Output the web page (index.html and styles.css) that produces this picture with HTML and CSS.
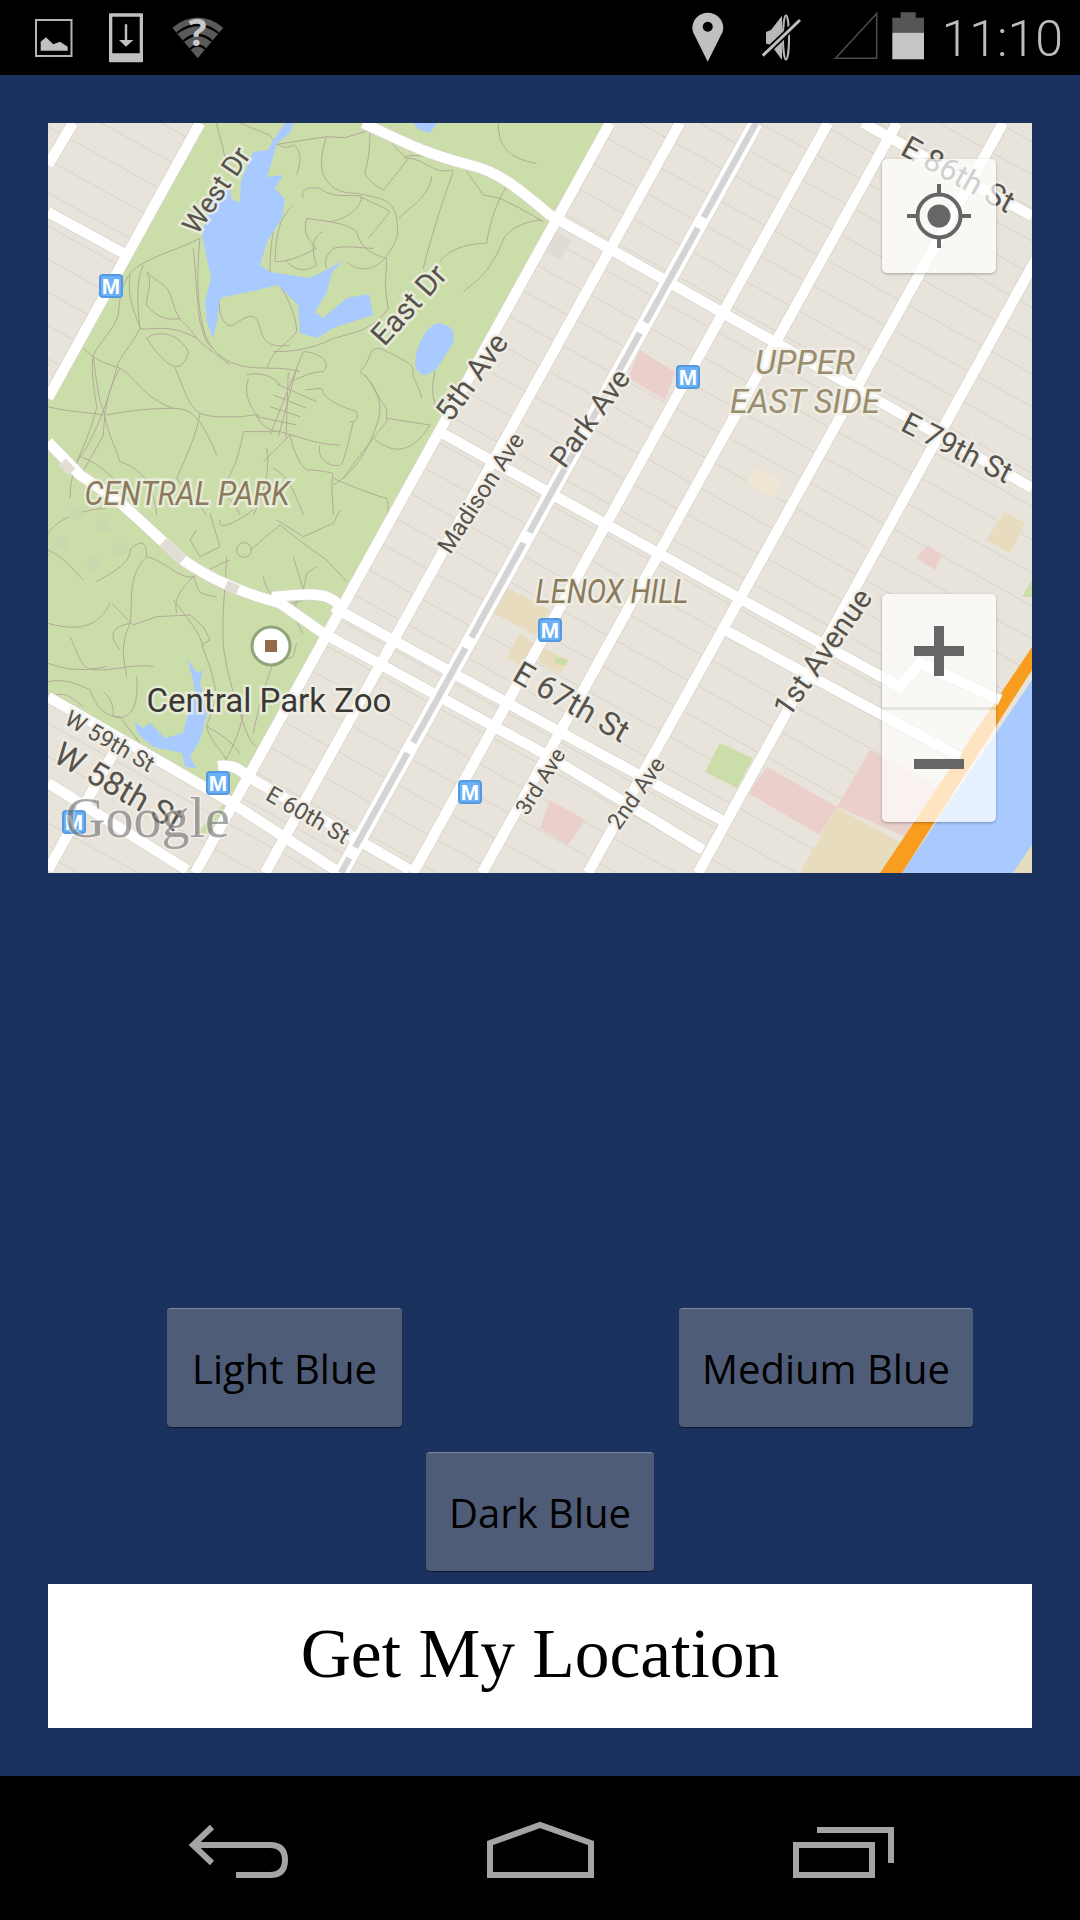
FILE: index.html
```html
<!DOCTYPE html>
<html lang="en">
<head>
  <meta charset="UTF-8">
  <meta name="viewport" content="width=device-width, initial-scale=1.0">
  <link rel="stylesheet" href="styles.css">
  <title>Get My Location</title>
</head>
<body>
  <div class="status-bar">
    <div class="status-group">
      <svg class="icon-photo" viewBox="35 0 38 75">
        <rect x="36" y="20" width="35.5" height="36" fill="none" stroke="#b4b4b4" stroke-width="2"/>
        <path d="M40.7 50.7V41.700L46 37.300 53.300 44.300 60 41.700 67.700 46.700V50.700Z" fill="#c0c0c0"/>
      </svg>
      <svg class="icon-download" viewBox="109 0 34 75">
        <path d="M110 13.300H142Q143 13.300 143 14.300V61.300Q143 62.300 142 62.300H110Q109 62.300 109 61.300V14.300Q109 13.300 110 13.300ZM112.300 16.700V53.300H139.700V16.700Z" fill="#c0c0c0" fill-rule="evenodd"/>
        <path d="M124.800 24.300H127.200V40H133.300L126 46.700 119 40H124.800Z" fill="#c0c0c0"/>
      </svg>
      <svg class="icon-wifi" viewBox="172 0 52 75">
        <path d="M172.300 27.700Q197.700 7.500 223.300 27.700L197.700 58.300Z" fill="#5a5a5a"/>
        <path d="M177 33Q197.700 17 218.500 33M183.500 41Q197.700 29 212 41M190 49Q197.700 42 205.500 49" fill="none" stroke="#000" stroke-width="2.200"/>
        <text class="wifi-mark" x="197.500" y="46">?</text>
      </svg>
    </div>
    <div class="status-group status-right">
      <svg class="icon-pin" viewBox="692 0 32 75">
        <path d="M707.700 61.700L695 36Q692.300 32 692.300 28.200A15.500 15.500 0 0 1 723.300 28.200Q723.300 32 720.500 36ZM707.700 21.700A5 5 0 1 0 707.800 21.700Z" fill="#c0c0c0" fill-rule="evenodd"/>
      </svg>
      <svg class="icon-mute" viewBox="761 0 40 75">
        <ellipse cx="786" cy="37.500" rx="3" ry="22" fill="none" stroke="#b8b8b8" stroke-width="2"/>
        <path d="M766 32L771 30 782 15.700V60L771 45 766 43.500Z" fill="#b8b8b8"/>
        <path d="M762.700 55.700L800 20" stroke="#000" stroke-width="6.500"/>
        <path d="M762.700 55.700L800 20" stroke="#c0c0c0" stroke-width="3"/>
      </svg>
      <svg class="icon-signal" viewBox="833 0 45 75">
        <path d="M835.500 58.300L876.700 13.500V58.300Z" fill="none" stroke="#4a4a4a" stroke-width="1.600"/>
      </svg>
      <svg class="icon-battery" viewBox="892 0 32 75">
        <path d="M900.700 12.300H915.700V17.700H924V32.700H892.300V17.700H900.700Z" fill="#565656"/>
        <rect x="892.300" y="32.700" width="31.700" height="26.600" fill="#c6c6c6"/>
      </svg>
      <span class="clock">11:10</span>
    </div>
  </div>

  <div class="main">
    <div class="map">
      <svg class="map-art" viewBox="48 123 984 750">
        <defs>
          <pattern id="alleys" width="100" height="29" patternUnits="userSpaceOnUse" patternTransform="rotate(29)">
            <path d="M0 .5H100" stroke="#d9d5ca" stroke-width="1"/>
          </pattern>
          <g id="roads" fill="none">
            <path d="M200 123L48 398M73 123L48 165M610 123L195 873M680 123L265 873M828 123L413 873M897 123L482 873M1003 123L588 873M1111 123L698 873M118 745L48 870"/>
            <path d="M363 123C400 140 420 152 470 165 500 172 520 190 550 215L1032 488M863 123L1032 216M48 212L123 253"/>
            <path d="M440 432L737 597 900 687 920 663 1000 700M333 607L540 721 725 822M280 603L323 633 550 757 703 850M725 630L960 757"/>
            <path d="M48 697L227 800 340 873M48 783L187 870M218 766C235 764 240 770 250 778L410 870"/>
            <path d="M48 442L80 475 117 500C135 515 150 530 183 560 200 572 230 590 280 603M272 597C300 594 310 594 325 596 335 600 340 605 342 610"/>
          </g>
        </defs>

        <rect x="48" y="123" width="984" height="750" fill="#e8e4dc"/>
        <rect x="48" y="123" width="984" height="750" fill="url(#alleys)"/>

        <!-- land use blocks -->
        <path class="block-pink" d="M640 350L675 372 665 400 628 378ZM767 767L837 807 820 835 748 793ZM870 750L960 800 913 840 837 807ZM928 545L942 555 935 570 916 558ZM550 800L585 820 568 845 540 828Z"/>
        <path class="block-sand" d="M507 588L550 610 535 635 493 613ZM520 633L537 647 523 667 507 657ZM540 647L570 660 560 673 540 663ZM1005 512L1025 523 1010 553 986 540ZM837 808L902 843 880 873H800Z"/>
        <path class="block-pale" d="M755 468L782 483 773 498 747 482Z"/>
        <path class="block-grey" d="M553 230L572 240 560 260 543 250Z"/>
        <path class="park" d="M720 743L753 758 737 788 705 772ZM1032 580V597L1022 597ZM557 657L568 660 565 666 554 663Z"/>

        <!-- central park -->
        <path class="park" d="M197 123L48 390V695L230 800 250 770 605 123ZM197 833L227 800 228 815 212 833Z"/>
        <g class="trails" transform="translate(40 115) scale(.3333)">
          <path d="M530 24C535 60 550 90 555 130M700 90L860 65 915 68 990 45"/>
          <path d="M860 65C845 110 840 140 850 180 870 220 900 235 950 235 1020 250 1060 250 1070 310 1075 360 1080 365 1035 430 1000 470 950 470 920 440"/>
          <path d="M990 50C990 100 985 140 975 170 975 190 1010 215 1030 225 1060 190 1090 150 1105 130 1150 130 1180 180 1240 165"/>
          <path d="M1175 185C1170 240 1120 270 1075 310M1240 170C1200 280 1170 380 1150 460M1375 24C1375 90 1400 130 1490 145"/>
          <path d="M1280 170L1330 240 1380 250 1440 280 1510 320M1400 215C1370 260 1350 320 1340 385 1270 385 1220 410 1200 440"/>
          <path d="M1505 315C1440 320 1400 350 1390 375 1350 470 1320 490 1270 530 1240 600M1270 540C1300 540 1320 560 1325 590 1310 620 1250 620 1190 620"/>
          <path d="M700 350C690 400 690 450 690 480 720 500 770 590 770 650 740 690 700 700 680 760"/>
          <path d="M760 270C720 310 710 340 705 440 750 440 790 420 830 400 800 370 790 350 800 310 860 320 910 320 950 350 960 400 1000 420 1040 430"/>
          <path d="M790 250C780 220 810 215 840 220 880 255 945 235 965 245 960 290 900 320 860 320M850 350C820 360 810 400 830 450 800 470 770 470 740 440"/>
          <path d="M880 400C860 420 850 440 860 460M880 400C920 390 960 400 1000 400"/>
          <path d="M1040 430C1040 480 1030 510 1045 580 1000 640 960 650 880 670 840 690 790 710 700 710 650 780 630 800M960 640V800"/>
          <path d="M540 550C530 620 570 640 580 630 610 610 650 580 660 640 670 680 690 700 750 690"/>
          <path d="M480 370C470 470 470 560 490 640 500 690 540 730 580 745 640 770 720 750 780 770"/>
          <path d="M310 450C290 490 290 560 300 640 330 650 380 620 470 670 500 700 520 710 570 750"/>
          <path d="M320 470C340 500 320 530 320 570 340 600 380 620 420 610 395 580 400 530 370 510 340 490 330 480 320 470"/>
          <path d="M300 640C270 700 240 720 230 760 210 840 160 980 120 1025"/>
          <path d="M130 700C160 730 180 740 240 760 280 780 310 850 400 880 450 880 480 900 530 1020M160 730C170 800 180 880 190 880M200 900C280 885 340 880 400 880"/>
          <path d="M320 670C360 640 420 660 445 710 440 740 420 760 400 755 360 730 340 700 320 670"/>
          <path d="M405 760C430 810 440 870 480 895 520 910 560 905 610 905 630 900 650 900 660 900"/>
          <path d="M625 790C610 840 630 870 650 900 660 930 690 950 720 950 790 970 840 990 900 990 920 1000"/>
          <path d="M940 920C930 960 920 1010 905 1050M840 990C830 1020 860 1060 900 1050M610 950C600 1000 590 1060 540 1130M610 950L720 950M670 1040L750 960"/>
          <path d="M750 960C760 1010 780 1050 800 1065 830 1065 860 1070 880 1075M880 1075C870 1110 880 1160 880 1200M880 1090C950 1120 1000 1140 1040 1150"/>
          <path d="M845 820C850 840 860 860 950 890 955 910 950 920 930 920M845 820L795 825"/>
          <path d="M1040 880C1000 830 1010 810 960 770 1000 730 980 700 1020 700 1060 720 1110 740 1120 760 1110 790 1140 810 1145 850 1140 890 1040 880"/>
          <path d="M1040 880L1040 920 1000 970M1040 910L1170 930M1190 880C1170 830 1180 800 1185 770"/>
          <path d="M975 780C1020 840 1030 880 1010 930 990 990 950 1070 880 1110M790 710C830 710 880 740 850 770 810 770 780 790 750 800M720 810C700 780 650 770 620 780"/>
          <path d="M790 710L690 960M770 760L715 965M745 770L738 970M712 808L830 860M700 840L800 880M690 875L780 905M650 905L770 930"/>
          <path d="M480 370C420 400 350 420 300 450 270 470 240 500 235 600 225 640 180 680 160 720M460 400C470 500 470 560 480 620 490 660 500 690 520 700M300 640C290 600 260 560 270 480M415 610C430 620 450 640 470 670"/>
          <path d="M160 720C150 780 170 860 170 880 150 950 130 1000 110 1040M240 760C200 830 195 880 190 960 170 1000 150 1030 130 1070M24 875C80 890 130 890 190 900M120 1025C100 1060 90 1110 90 1150M120 1025C170 1040 210 1080 250 1120"/>
          <path d="M600 24C640 40 660 50 690 60 700 80 730 110 760 90 790 110 780 150 770 180 730 190 720 210M760 90C750 130 740 150 770 180 800 170 830 150 845 140M720 210C730 230 760 270 790 265M700 130C720 150 750 165 770 180"/>
          <path d="M1090 130C1120 110 1170 130 1240 135M1000 20C1040 30 1040 90 1105 130M960 245C1000 265 1040 280 1050 290 1020 330 1000 350 985 370 960 400M1050 280C1010 320 960 340 925 360M860 320C860 350 850 380 880 400 900 380 940 350 960 370M1000 265C990 300 970 330 960 350M1075 310C1080 310 1140 280 1160 260M1110 360C1150 400 1110 410 1040 470M1210 440C1180 460 1170 500 1150 600"/>
          <path d="M1000 970C1040 1000 1100 1040 1170 930M1040 1150C1050 1180 1040 1200 1040 1200M700 1060C740 1080 760 1120 790 1200M540 1130C580 1150 600 1200 600 1200M480 895C470 960 440 1020 410 1090 440 1130 480 1170 500 1200M190 880C200 950 220 980 240 1040 300 1060 340 1100 350 1200M1000 970C970 1010 950 1030 910 1090M680 1000C690 1050 680 1120 640 1200"/>
        </g>
        <g class="trails" transform="translate(40 500) scale(.3333)">
          <path d="M24 150C70 170 100 210 130 240M170 245C230 210 270 190 270 150M210 310C180 370 130 400 24 370"/>
          <path d="M215 310L280 375 350 350 450 345 490 380 510 420 485 435 510 500 520 540"/>
          <path d="M320 170C260 230 280 300 270 370 240 440 250 470 260 530 250 570 200 620"/>
          <path d="M320 170C370 180 420 240 460 230 500 215 520 200 570 180M460 230C420 270 400 300 410 340"/>
          <path d="M560 170C555 280 545 350 550 440 560 500 570 570 610 640 600 700 570 760 550 790"/>
          <path d="M590 150a22 22 0 1 0 44 0a22 22 0 1 0-44 0M630 150L720 75 790 130 860 180 920 245"/>
          <path d="M510 40L540 140 480 170 450 120 470 90M760 170L790 270 800 220 830 200M700 490C680 540 660 600 640 700"/>
          <path d="M24 490C60 500 100 520 200 500M90 410C120 470 120 510 170 510 230 510 300 490 340 500 450 530 500 560"/>
          <path d="M24 545C70 535 110 550 150 570 170 620 190 650 240 650M190 575C220 600 220 630 220 650 250 660 300 650 290 530"/>
          <path d="M500 680C540 700 570 720 600 760M710 60L790 110 880 70 900 30M540 60C530 100 600 60 640 30 720 20 780 50"/>
          <path d="M24 100C60 50 130 30 200 24M270 150C300 120 320 120 320 170M460 230C480 270 460 280 530 290M400 300C440 350 480 400 490 440M270 370C220 380 200 400 240 450 300 490 330 510M150 570C130 600 130 630 170 660"/>
          <path d="M240 650C260 680 280 700 300 730M520 540C540 600 510 640 500 680 510 730 560 760 560 790M600 640C620 700 630 730 650 740M700 490L760 470 770 430M790 270C750 300 770 380 790 400M670 230C680 280 720 330 790 300M24 600C70 560 100 600 130 620 160 640 170 660"/>
          <g class="park-dots">
            <circle cx="105" cy="40" r="22"/><circle cx="190" cy="75" r="22"/><circle cx="65" cy="130" r="22"/><circle cx="240" cy="145" r="22"/><circle cx="160" cy="190" r="22"/>
          </g>
        </g>

        <!-- water -->
        <path class="water" d="M213 195L230 188 232 200 240 202 241 180 253 152 268 150 272 142 285 123H293L290 133 277 143 273 157 267 177 283 175 275 188 285 200 282 218 267 242 260 265 270 272 310 278 330 268 343 261 332 272 327 292 315 312 323 318 347 298 369 294 373 315 333 328 317 338 300 333 298 305 278 285 257 290 220 298 217 322 213 338 207 322 205 302 211 278 202 235Z"/>
        <path class="water" d="M437 323Q453 326 453 332 455 340 452 345L437 368Q430 375 423 375 415 372 415 362 416 352 420 342 428 326 437 323ZM413 123H437L430 133 420 130Z"/>
        <path class="water" d="M187 658L197 673 203 670 200 683 207 713 200 740 190 757 197 768 185 767 182 753 153 747 137 733 135 722 143 728 150 723 165 738 183 733 188 713 195 693 193 680Z"/>
        <path class="water" d="M1032 680L902 873H1032Z"/>
        <path class="block-sand" d="M1013 873L1032 845V873Z"/>
        <path class="highway" d="M1032 647L880 873H902L1032 670Z"/>
        <circle class="highway" cx="908" cy="848" r="8"/>

        <!-- streets -->
        <use href="#roads" stroke="#d9d4ca" stroke-width="12"/>
        <path class="avenue-edge" d="M756 123L341 873"/>
        <use href="#roads" stroke="#fff" stroke-width="10.500"/>
        <path class="avenue-wide" d="M756 123L341 873"/>
        <path class="avenue-median" d="M756 123L341 873"/>
        <path class="park-gate" d="M62 462L72 472M163 542L183 560M226 585L238 590"/>

        <!-- poi -->
        <circle class="zoo-ring" cx="271" cy="646" r="19"/>
        <rect class="zoo-square" x="265" y="640" width="12" height="12"/>
        <text class="zoo-name" x="269" y="712" textLength="245" lengthAdjust="spacingAndGlyphs">Central Park Zoo</text>

        <!-- neighbourhoods -->
        <text class="hood" x="187" y="505" textLength="205" lengthAdjust="spacingAndGlyphs">CENTRAL PARK</text>
        <text class="hood hood-light" x="805" y="374" textLength="100" lengthAdjust="spacingAndGlyphs">UPPER</text>
        <text class="hood hood-light" x="805" y="413" textLength="150" lengthAdjust="spacingAndGlyphs">EAST SIDE</text>
        <text class="hood" x="612" y="603" textLength="153" lengthAdjust="spacingAndGlyphs">LENOX HILL</text>

        <!-- street names -->
        <text class="street" font-size="28" transform="translate(216 190) rotate(-56)" y="10">West Dr</text>
        <text class="street" font-size="30" transform="translate(409 305) rotate(-48)" y="10">East Dr</text>
        <text class="street" font-size="30" transform="translate(472 377) rotate(-54)" y="10">5th Ave</text>
        <text class="street" font-size="24" transform="translate(481 493) rotate(-57)" y="8">Madison Ave</text>
        <text class="street" font-size="29" transform="translate(590 418) rotate(-54)" y="10">Park Ave</text>
        <text class="street" font-size="31" transform="translate(958 175) rotate(29)" y="10">E 86th St</text>
        <text class="street" font-size="30" transform="translate(957 448) rotate(27)" y="10">E 79th St</text>
        <text class="street" font-size="23" transform="translate(110 741) rotate(30)" y="8">W 59th St</text>
        <text class="street" font-size="33" transform="translate(119 786) rotate(30)" y="12">W 58th St</text>
        <text class="street" font-size="23" transform="translate(308 815) rotate(30)" y="8">E 60th St</text>
        <text class="street" font-size="32" transform="translate(572 701) rotate(30)" y="12">E 67th St</text>
        <text class="street" font-size="22" transform="translate(540 781) rotate(-58)" y="8">3rd Ave</text>
        <text class="street" font-size="23" transform="translate(636 793) rotate(-55)" y="8">2nd Ave</text>
        <text class="street" font-size="30" transform="translate(822 652) rotate(-55)" y="11">1st Avenue</text>

        <!-- subway -->
        <g class="metro" transform="translate(111 286)"><rect x="-11" y="-11" width="22" height="22" rx="3"/><text y="8">M</text></g>
        <g class="metro" transform="translate(688 377)"><rect x="-11" y="-11" width="22" height="22" rx="3"/><text y="8">M</text></g>
        <g class="metro" transform="translate(218 783)"><rect x="-11" y="-11" width="22" height="22" rx="3"/><text y="8">M</text></g>
        <g class="metro" transform="translate(470 792)"><rect x="-11" y="-11" width="22" height="22" rx="3"/><text y="8">M</text></g>
        <g class="metro" transform="translate(74 822)"><rect x="-11" y="-11" width="22" height="22" rx="3"/><text y="8">M</text></g>
        <g class="metro" transform="translate(550 630)"><rect x="-11" y="-11" width="22" height="22" rx="3"/><text y="8">M</text></g>

        <text class="google" x="65" y="837">Google</text>
      </svg>

      <div class="map-ctl locate">
        <svg class="locate-icon" viewBox="0 0 64 64">
          <circle cx="32" cy="32" r="21.500" fill="none" stroke="#666" stroke-width="4"/>
          <circle cx="32" cy="32" r="11.500" fill="#666"/>
          <path d="M32 0V11M32 53V64M0 32H11M53 32H64" stroke="#666" stroke-width="4"/>
        </svg>
      </div>
      <div class="map-ctl zoom">
        <div class="zoom-btn"><span class="bar-h"></span><span class="bar-v"></span></div>
        <div class="zoom-btn zoom-out"><span class="bar-h"></span></div>
      </div>
    </div>

    <div class="colors">
      <div class="color-row top">
        <button class="color-btn btn-light">Light Blue</button>
        <button class="color-btn btn-medium">Medium Blue</button>
      </div>
      <div class="color-row middle">
        <button class="color-btn btn-dark">Dark Blue</button>
      </div>
    </div>
    <button class="locate-btn">Get My Location</button>
  </div>

  <div class="nav-bar">
    <svg class="nav-art" viewBox="0 1776 1080 144">
      <path d="M212 1827L193 1845 212 1863M193 1845H270Q285 1845 285 1860 285 1875 270 1875H236" fill="none" stroke="#a4a4a4" stroke-width="6"/>
      <path d="M490 1875V1843L540 1825 591 1843V1875Z" fill="none" stroke="#a4a4a4" stroke-width="6"/>
      <path d="M796 1845H872V1875H796ZM817 1830H891V1863" fill="none" stroke="#a4a4a4" stroke-width="6"/>
    </svg>
  </div>
</body>
</html>
```

FILE: styles.css
```css
html, body {
  height: 100%;
}

body {
  margin: 0;
  display: flex;
  flex-direction: column;
  height: 1920px;
  background-color: #1b315e;
  font-family: 'Open Sans', sans-serif;
}

/* status bar */
.status-bar {
  display: flex;
  justify-content: space-between;
  height: 75px;
  flex: none;
  background-color: #000;
}

.status-group {
  display: flex;
  padding-left: 35px;
}

.status-right {
  padding: 0 17px 0 0;
}

.status-group svg {
  height: 75px;
  display: block;
  flex: none;
}

.icon-photo { width: 38px; margin-right: 36px; }
.icon-download { width: 34px; margin-right: 29px; }
.icon-wifi { width: 52px; }
.icon-pin { width: 32px; margin-right: 37px; }
.icon-mute { width: 40px; margin-right: 32px; }
.icon-signal { width: 45px; margin-right: 14px; }
.icon-battery { width: 32px; margin-right: 18px; }

.wifi-mark {
  font-family: 'Open Sans', sans-serif;
  font-weight: 700;
  font-size: 38px;
  fill: #c8c8c8;
  text-anchor: middle;
}

.clock {
  font-family: Roboto, sans-serif;
  font-weight: 300;
  font-size: 50px;
  line-height: 79px;
  color: #bdbdbd;
}

/* main column */
.main {
  flex: 1;
  display: flex;
  flex-direction: column;
  padding: 48px;
}

.map {
  position: relative;
  width: 984px;
  height: 750px;
  overflow: hidden;
}

.map-art {
  display: block;
  width: 984px;
  height: 750px;
}

.block-pink { fill: #ebcfcb; }
.block-sand { fill: #e7dcbd; }
.block-pale { fill: #efe6d4; }
.block-grey { fill: #e0dcd5; }
.park { fill: #cbdea9; }
.water { fill: #a9caff; }
.highway { fill: #f99d1f; }

.trails path {
  fill: none;
  stroke: #b3a998;
  stroke-width: 3;
}

.park-dots circle {
  fill: #c8d9ad;
}

.avenue-edge {
  fill: none;
  stroke: #d9d4ca;
  stroke-width: 16;
}

.avenue-wide {
  fill: none;
  stroke: #fff;
  stroke-width: 14.500;
}

.avenue-median {
  fill: none;
  stroke: #d4d4d4;
  stroke-width: 6.500;
  stroke-dasharray: 108 12;
}

.park-gate {
  fill: none;
  stroke: #e2ddd3;
  stroke-width: 10;
}

.zoo-ring {
  fill: #fff;
  stroke: #8fa67a;
  stroke-width: 3;
}

.zoo-square {
  fill: #94694a;
}

.zoo-name {
  font-family: Roboto, sans-serif;
  font-size: 33px;
  fill: #3a3835;
  stroke: rgba(240, 240, 230, .75);
  stroke-width: 5;
  paint-order: stroke;
  text-anchor: middle;
}

.hood {
  font-family: Roboto, sans-serif;
  font-style: italic;
  font-size: 33px;
  fill: #8c7a5c;
  stroke: rgba(240, 240, 230, .8);
  stroke-width: 5;
  paint-order: stroke;
  text-anchor: middle;
}

.hood-light {
  fill: #9a8c6f;
}

.street {
  font-family: Roboto, sans-serif;
  fill: #57534c;
  stroke: rgba(240, 238, 230, .8);
  stroke-width: 5;
  paint-order: stroke;
  text-anchor: middle;
}

.metro rect {
  fill: #6ab1f7;
  stroke: #559ae0;
  stroke-width: 2;
}

.metro text {
  font-family: 'Liberation Sans', sans-serif;
  font-weight: 700;
  font-size: 22px;
  fill: #fff;
  text-anchor: middle;
}

.google {
  font-family: 'Liberation Serif', serif;
  font-size: 56px;
  fill: rgba(95, 95, 95, .55);
  stroke: rgba(255, 255, 255, .35);
  stroke-width: 3;
  paint-order: stroke;
}

/* map controls */
.map-ctl {
  position: absolute;
  left: 834px;
  width: 114px;
  border-radius: 5px;
  background-color: rgba(255, 255, 255, .72);
  box-shadow: 0 1px 3px rgba(0, 0, 0, .3);
}

.locate {
  top: 36px;
  height: 114px;
  display: flex;
  align-items: center;
  justify-content: center;
}

.locate-icon {
  width: 64px;
  height: 64px;
}

.zoom {
  top: 471px;
  height: 228px;
}

.zoom-btn {
  position: relative;
  height: 113px;
  border-bottom: 3px solid rgba(0, 0, 0, .08);
}

.zoom-out {
  height: 112px;
  border-bottom: 0;
}

.bar-h,
.bar-v {
  position: absolute;
  background-color: #666;
}

.bar-h {
  left: 32px;
  top: 52px;
  width: 50px;
  height: 10px;
}

.bar-v {
  left: 52px;
  top: 32px;
  width: 10px;
  height: 50px;
}

.zoom-out .bar-h {
  top: 49px;
}

/* color buttons */
.colors {
  margin-top: auto;
  display: flex;
  flex-direction: column;
  gap: 25px;
}

.color-row {
  display: flex;
}

.color-row.top {
  justify-content: space-between;
  padding: 0 59px 0 119px;
}

.color-row.middle {
  justify-content: center;
}

.color-btn {
  height: 119px;
  padding: 0;
  border: 0;
  border-top: 1px solid #7c889d;
  border-radius: 4px;
  background-color: #4f5c77;
  box-shadow: 0 1px 1px rgba(0, 0, 0, .5);
  color: #000;
  font-family: 'Open Sans', sans-serif;
  font-size: 40px;
}

.btn-light { width: 235px; }
.btn-medium { width: 294px; }
.btn-dark { width: 228px; }

.locate-btn {
  flex: none;
  height: 144px;
  margin-top: 13px;
  padding: 0 0 4px;
  border: 0;
  background-color: #fff;
  color: #000;
  font-family: 'Liberation Serif', serif;
  font-size: 69.500px;
}

/* nav bar */
.nav-bar {
  flex: none;
  height: 144px;
  background-color: #000;
}

.nav-art {
  display: block;
  width: 1080px;
  height: 144px;
}
```
